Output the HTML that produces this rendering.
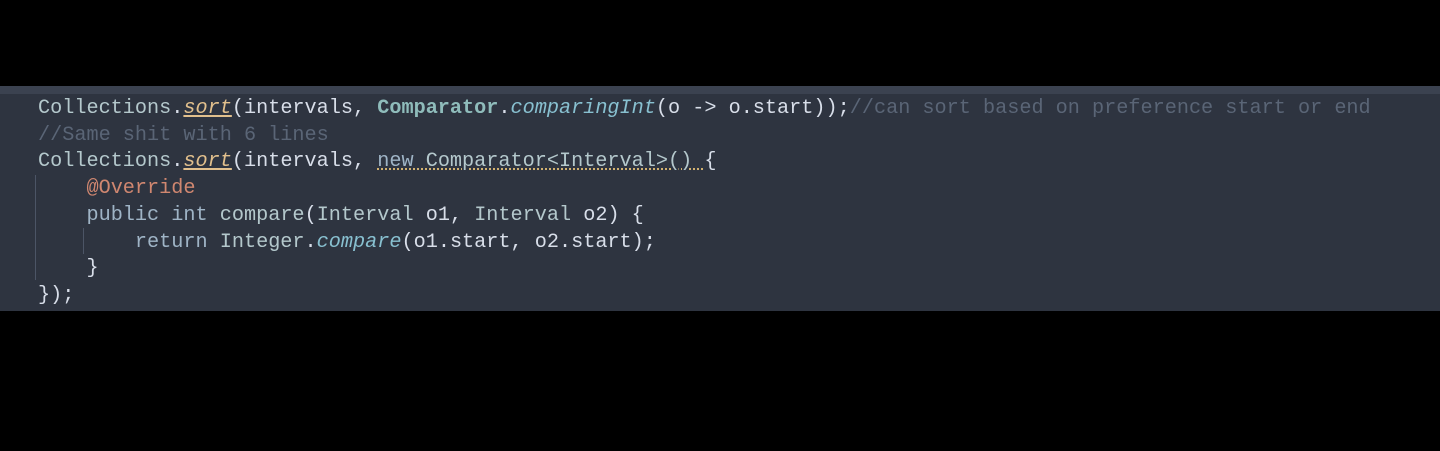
<!DOCTYPE html>
<html><head><style>
html,body{margin:0;background:#000;width:1440px;height:451px;overflow:hidden}
.p{position:absolute;top:86px;left:0;width:1440px;height:225px;background:#2e3440}
.t{position:absolute;top:86px;left:0;width:1440px;height:8px;background:#3b4250}
.c{position:absolute;left:38px;top:96px;font-family:"Liberation Mono",monospace;font-size:20.2px;line-height:26.7px;color:#d8dee9;white-space:pre}
.cm{color:#5a6576}.k{color:#9fb4c6}.s{color:#e2c08d;font-style:italic;text-decoration:underline;text-decoration-color:#e2c08d}
.b{color:#8fbcbb;font-weight:bold}.i{color:#88c0d0;font-style:italic}.a{color:#d08770}
.n{text-decoration:underline dotted #d0b070}.ty{color:#b4c8cc}
.g{position:absolute;width:1px;background:#4c5566}
</style></head><body>
<div class="p"></div><div class="t"></div>
<div class="g" style="left:35px;top:175px;height:105px"></div>
<div class="g" style="left:83px;top:228px;height:26px"></div>
<div class="c"><span class="ty">Collections</span>.<span class="s">sort</span>(intervals, <span class="b">Comparator</span>.<span class="i">comparingInt</span>(o -&gt; o.start));<span class="cm">//can sort based on preference start or end</span>
<span class="cm">//Same shit with 6 lines</span>
<span class="ty">Collections</span>.<span class="s">sort</span>(intervals, <span class="n"><span class="k">new</span> <span class="ty">Comparator&lt;Interval&gt;() </span></span>{
    <span class="a">@Override</span>
    <span class="k">public int</span> <span class="ty">compare</span>(<span class="ty">Interval</span> o1, <span class="ty">Interval</span> o2) {
        <span class="k">return</span> <span class="ty">Integer</span>.<span class="i">compare</span>(o1.start, o2.start);
    }
});</div>
</body></html>
